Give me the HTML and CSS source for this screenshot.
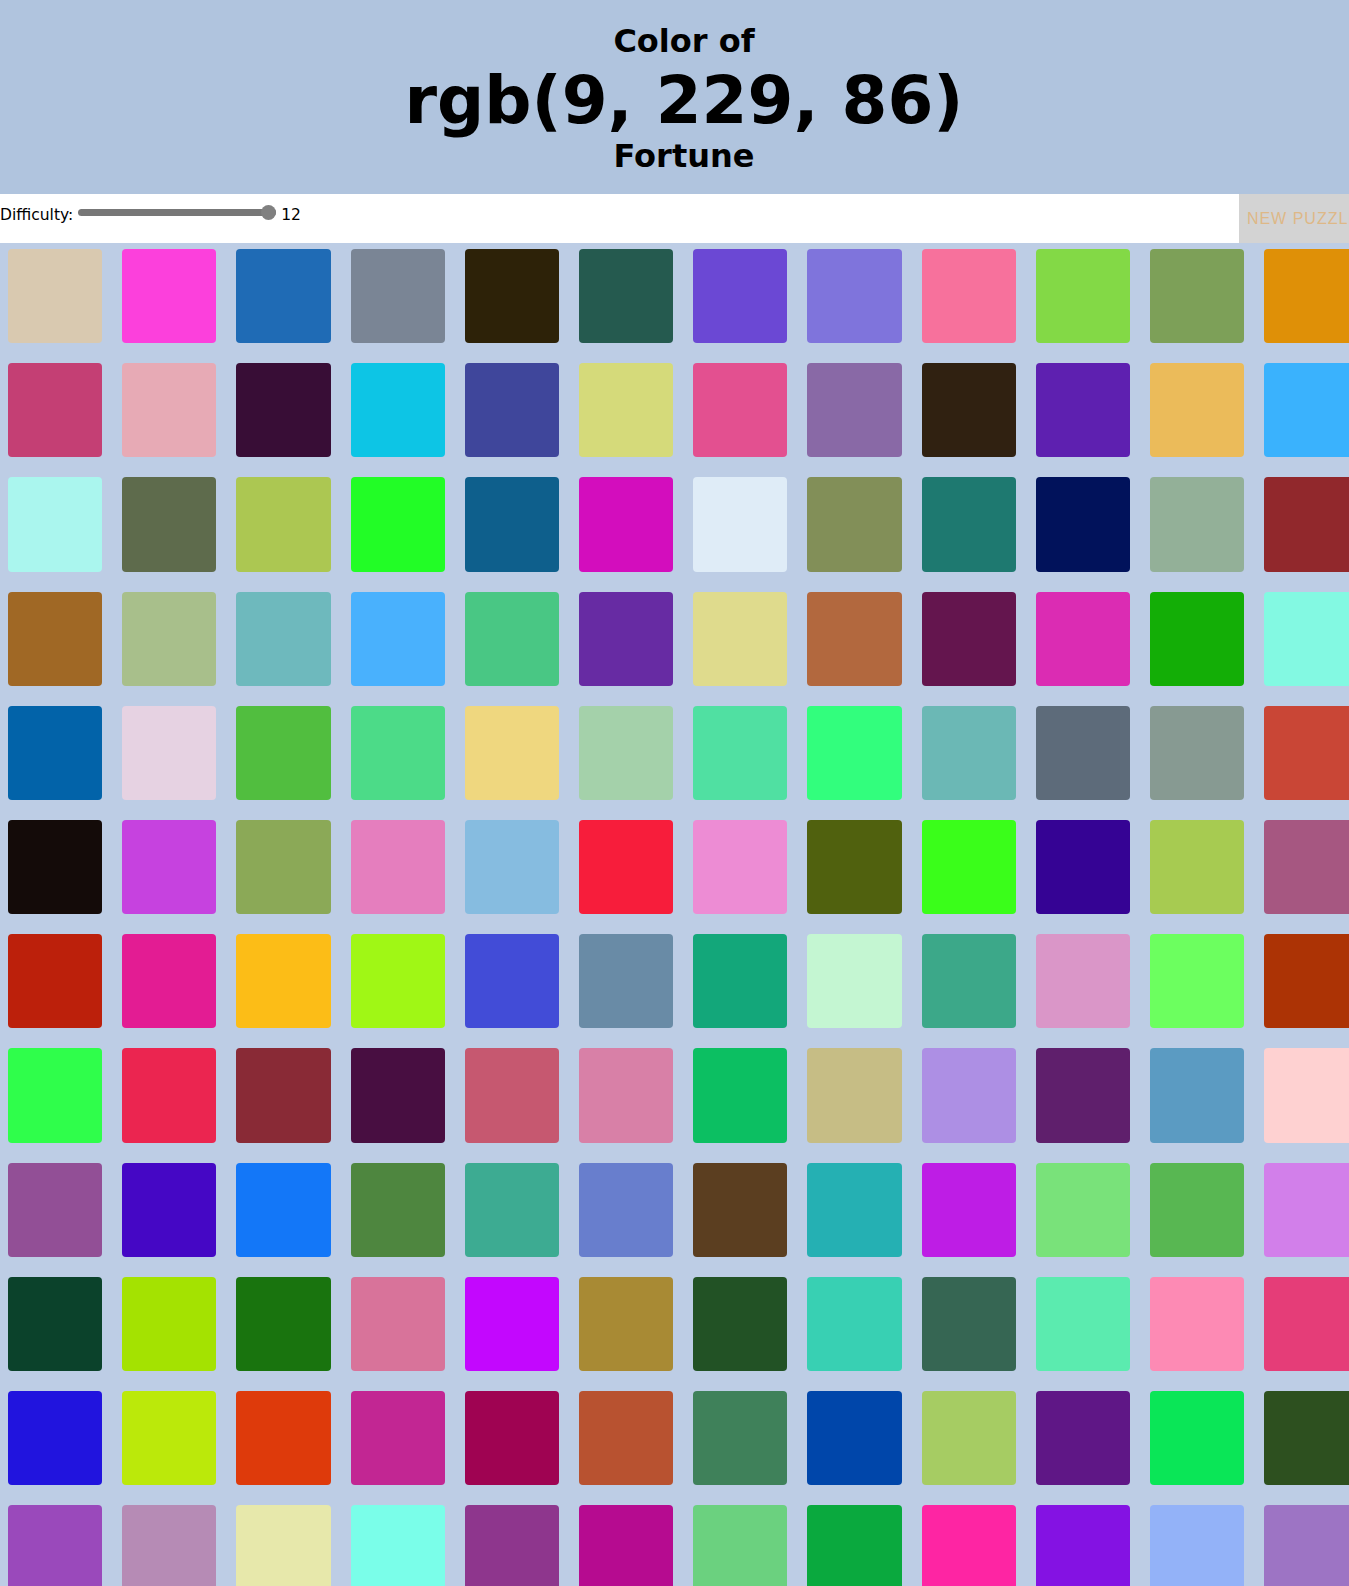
FILE: index.html
```html
<!DOCTYPE html>
<html lang="en">
<head>
<meta charset="utf-8">
<title>Color Game</title>
<link rel="stylesheet" href="styles.css">
</head>
<body>
<div class="page">
  <header class="header">
    <div class="line-small">Color of</div>
    <div class="line-big">rgb(9, 229, 86)</div>
    <div class="line-fortune">Fortune</div>
  </header>
  <div class="toolbar">
    <div class="controls">
      <span class="label">Difficulty:</span>
      <input class="slider" type="range" min="2" max="12" value="12">
      <span class="label value">12</span>
    </div>
    <button class="new-btn">New Puzzle</button>
  </div>
  <div class="grid">
    <div class="sq" style="background:#d9c9b0"></div>
    <div class="sq" style="background:#fc40dc"></div>
    <div class="sq" style="background:#1f6bb5"></div>
    <div class="sq" style="background:#7a8595"></div>
    <div class="sq" style="background:#2d2208"></div>
    <div class="sq" style="background:#255a4f"></div>
    <div class="sq" style="background:#6b48d4"></div>
    <div class="sq" style="background:#7f74dc"></div>
    <div class="sq" style="background:#f7719c"></div>
    <div class="sq" style="background:#83d946"></div>
    <div class="sq" style="background:#7da058"></div>
    <div class="sq" style="background:#df9007"></div>

    <div class="sq" style="background:#c43f74"></div>
    <div class="sq" style="background:#e7aab5"></div>
    <div class="sq" style="background:#380d36"></div>
    <div class="sq" style="background:#0dc5e5"></div>
    <div class="sq" style="background:#3f469b"></div>
    <div class="sq" style="background:#d5da7a"></div>
    <div class="sq" style="background:#e35090"></div>
    <div class="sq" style="background:#8969a6"></div>
    <div class="sq" style="background:#302111"></div>
    <div class="sq" style="background:#5e20b0"></div>
    <div class="sq" style="background:#ebbb5a"></div>
    <div class="sq" style="background:#3ab2fd"></div>

    <div class="sq" style="background:#aaf6ee"></div>
    <div class="sq" style="background:#5e6b4c"></div>
    <div class="sq" style="background:#acc752"></div>
    <div class="sq" style="background:#22fd26"></div>
    <div class="sq" style="background:#0e5f8c"></div>
    <div class="sq" style="background:#d30dbd"></div>
    <div class="sq" style="background:#dfecf7"></div>
    <div class="sq" style="background:#828f58"></div>
    <div class="sq" style="background:#1e7970"></div>
    <div class="sq" style="background:#01125b"></div>
    <div class="sq" style="background:#93b098"></div>
    <div class="sq" style="background:#91282c"></div>

    <div class="sq" style="background:#a06825"></div>
    <div class="sq" style="background:#a8bf8b"></div>
    <div class="sq" style="background:#6eb9bd"></div>
    <div class="sq" style="background:#49b1fd"></div>
    <div class="sq" style="background:#49c784"></div>
    <div class="sq" style="background:#672ba3"></div>
    <div class="sq" style="background:#dfdb8d"></div>
    <div class="sq" style="background:#b2683e"></div>
    <div class="sq" style="background:#64154e"></div>
    <div class="sq" style="background:#db2cb3"></div>
    <div class="sq" style="background:#13ae06"></div>
    <div class="sq" style="background:#83f9e2"></div>

    <div class="sq" style="background:#0263a9"></div>
    <div class="sq" style="background:#e6d2e2"></div>
    <div class="sq" style="background:#51be3f"></div>
    <div class="sq" style="background:#4cdb88"></div>
    <div class="sq" style="background:#efd77f"></div>
    <div class="sq" style="background:#a4d1aa"></div>
    <div class="sq" style="background:#50e0a2"></div>
    <div class="sq" style="background:#32fe7d"></div>
    <div class="sq" style="background:#6bb8b5"></div>
    <div class="sq" style="background:#5d6b7a"></div>
    <div class="sq" style="background:#879a92"></div>
    <div class="sq" style="background:#c94636"></div>

    <div class="sq" style="background:#140b09"></div>
    <div class="sq" style="background:#c642df"></div>
    <div class="sq" style="background:#8ba957"></div>
    <div class="sq" style="background:#e57ebe"></div>
    <div class="sq" style="background:#86bce0"></div>
    <div class="sq" style="background:#f71d3b"></div>
    <div class="sq" style="background:#ed8cd4"></div>
    <div class="sq" style="background:#50610e"></div>
    <div class="sq" style="background:#3afe1a"></div>
    <div class="sq" style="background:#350394"></div>
    <div class="sq" style="background:#a7cb51"></div>
    <div class="sq" style="background:#a65781"></div>

    <div class="sq" style="background:#bc200b"></div>
    <div class="sq" style="background:#e31c93"></div>
    <div class="sq" style="background:#fcbd17"></div>
    <div class="sq" style="background:#a0f715"></div>
    <div class="sq" style="background:#424cd7"></div>
    <div class="sq" style="background:#698ba6"></div>
    <div class="sq" style="background:#13a77a"></div>
    <div class="sq" style="background:#c4f6d2"></div>
    <div class="sq" style="background:#3ca889"></div>
    <div class="sq" style="background:#da96c8"></div>
    <div class="sq" style="background:#6cff5f"></div>
    <div class="sq" style="background:#ac3305"></div>

    <div class="sq" style="background:#2ffe4b"></div>
    <div class="sq" style="background:#eb2550"></div>
    <div class="sq" style="background:#892a36"></div>
    <div class="sq" style="background:#480e41"></div>
    <div class="sq" style="background:#c65870"></div>
    <div class="sq" style="background:#d880a7"></div>
    <div class="sq" style="background:#0cbf62"></div>
    <div class="sq" style="background:#c6bd85"></div>
    <div class="sq" style="background:#ad8fe4"></div>
    <div class="sq" style="background:#5f1f6c"></div>
    <div class="sq" style="background:#5b9bc2"></div>
    <div class="sq" style="background:#fed1d1"></div>

    <div class="sq" style="background:#924f96"></div>
    <div class="sq" style="background:#4507c5"></div>
    <div class="sq" style="background:#1377f8"></div>
    <div class="sq" style="background:#4e863f"></div>
    <div class="sq" style="background:#3dab92"></div>
    <div class="sq" style="background:#687ecd"></div>
    <div class="sq" style="background:#5b3e20"></div>
    <div class="sq" style="background:#25b0b3"></div>
    <div class="sq" style="background:#be1de5"></div>
    <div class="sq" style="background:#79e27a"></div>
    <div class="sq" style="background:#58b752"></div>
    <div class="sq" style="background:#d27fea"></div>

    <div class="sq" style="background:#0b422b"></div>
    <div class="sq" style="background:#a4e201"></div>
    <div class="sq" style="background:#19740e"></div>
    <div class="sq" style="background:#d8739a"></div>
    <div class="sq" style="background:#c307fe"></div>
    <div class="sq" style="background:#a88a34"></div>
    <div class="sq" style="background:#225225"></div>
    <div class="sq" style="background:#38d0b3"></div>
    <div class="sq" style="background:#366653"></div>
    <div class="sq" style="background:#5bebaf"></div>
    <div class="sq" style="background:#fd8ab4"></div>
    <div class="sq" style="background:#e53d78"></div>

    <div class="sq" style="background:#2114de"></div>
    <div class="sq" style="background:#bbe90a"></div>
    <div class="sq" style="background:#de3a0b"></div>
    <div class="sq" style="background:#c22693"></div>
    <div class="sq" style="background:#9f0352"></div>
    <div class="sq" style="background:#b85230"></div>
    <div class="sq" style="background:#3f815a"></div>
    <div class="sq" style="background:#0046aa"></div>
    <div class="sq" style="background:#a6cc63"></div>
    <div class="sq" style="background:#5f1786"></div>
    <div class="sq" style="background:#0ae657"></div>
    <div class="sq" style="background:#2d501f"></div>

    <div class="sq" style="background:#9a49bb"></div>
    <div class="sq" style="background:#b68bb5"></div>
    <div class="sq" style="background:#e7e8ab"></div>
    <div class="sq" style="background:#7afee9"></div>
    <div class="sq" style="background:#8e368d"></div>
    <div class="sq" style="background:#b60b90"></div>
    <div class="sq" style="background:#6bd17f"></div>
    <div class="sq" style="background:#0aa93e"></div>
    <div class="sq" style="background:#fe25a3"></div>
    <div class="sq" style="background:#8412e3"></div>
    <div class="sq" style="background:#93b2f8"></div>
    <div class="sq" style="background:#9d74c4"></div>
  </div>
</div>
</body>
</html>
```

FILE: styles.css
```css
html, body {
  margin: 0;
  padding: 0;
  overflow: hidden;
  background: #bdcde5;
}

body {
  font-family: "DejaVu Sans", sans-serif;
  color: #000;
}

.page {
  width: 1368px;
}

.header {
  background: #b0c4de;
  text-align: center;
  font-weight: bold;
  padding: 21px 0 22px;
}

.line-small {
  font-size: 32px;
  line-height: 40px;
}

.line-big {
  font-size: 66px;
  line-height: 79px;
}

.line-fortune {
  font-size: 32px;
  line-height: 32px;
}

.toolbar {
  display: flex;
  justify-content: space-between;
  height: 49px;
  background: #fff;
}

.controls {
  display: flex;
  align-items: flex-start;
  padding-top: 11px;
}

.label {
  font-size: 15.5px;
  line-height: 17px;
  margin-top: 2px;
}

.value {
  margin-left: 5px;
}

.slider {
  -webkit-appearance: none;
  appearance: none;
  width: 198px;
  height: 15px;
  margin: 0 0 0 5px;
  padding: 0;
  background: transparent;
}

.slider::-webkit-slider-runnable-track {
  height: 7px;
  background: #777777;
  border-radius: 4px;
}

.slider::-webkit-slider-thumb {
  -webkit-appearance: none;
  width: 15px;
  height: 15px;
  margin-top: -4px;
  border-radius: 50%;
  background: #808080;
}

.new-btn {
  border: none;
  margin: 0;
  padding: 0 8px;
  height: 49px;
  background: #d3d3d3;
  color: #deb887;
  font-family: "Liberation Sans", Arial, sans-serif;
  font-size: 16px;
  letter-spacing: 1px;
  text-transform: uppercase;
}

.grid {
  display: grid;
  grid-template-columns: repeat(12, 94.2px);
  grid-auto-rows: 94.2px;
  gap: 20px;
  padding: 6px 0 0 8px;
}

.sq {
  border-radius: 4px;
}
```
